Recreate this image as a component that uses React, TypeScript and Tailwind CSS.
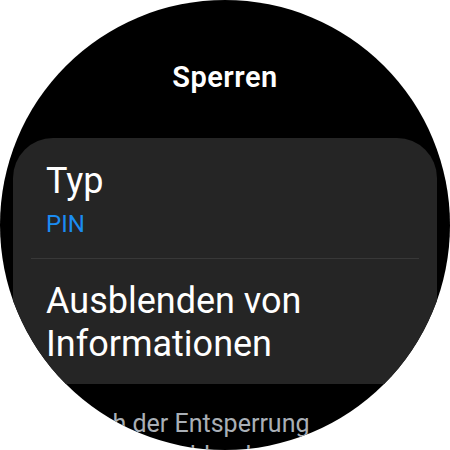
const font = { fontFamily: 'Roboto, "Noto Sans", sans-serif' }

function ListItem({ title, value }: { title: string; value?: string }) {
  return (
    <div className="px-[33px]">
      <p className="text-[36px] leading-[43px] text-white">{title}</p>
      {value && (
        <p className="mt-[6px] text-[24px] leading-[30px] text-[#1b8cf2]">{value}</p>
      )}
    </div>
  )
}

export default function App() {
  return (
    <div className="h-[450px] w-[450px] bg-white" style={font}>
      <div className="h-[450px] w-[450px] overflow-hidden rounded-full bg-black">
        <h1 className="pt-[60px] text-center text-[29px] font-semibold leading-[34px] tracking-[0.5px] text-white">
          Sperren
        </h1>

        <div className="mx-[13px] mt-[44px] rounded-[40px] bg-[#252525] pt-[22px] pb-[18px]">
          <ListItem title="Typ" value="PIN" />
          <div className="mx-[18px] mt-[19px] h-px bg-[#383838]" />
          <div className="mt-[21px]">
            <ListItem title="Ausblenden von Informationen" />
          </div>
        </div>

        <p className="mt-[24px] w-[330px] pl-[68px] text-[25px] leading-[32px] text-[#a9afb6]">
          Nach der Entsperrung Inhalte ausblenden
        </p>
      </div>
    </div>
  )
}
